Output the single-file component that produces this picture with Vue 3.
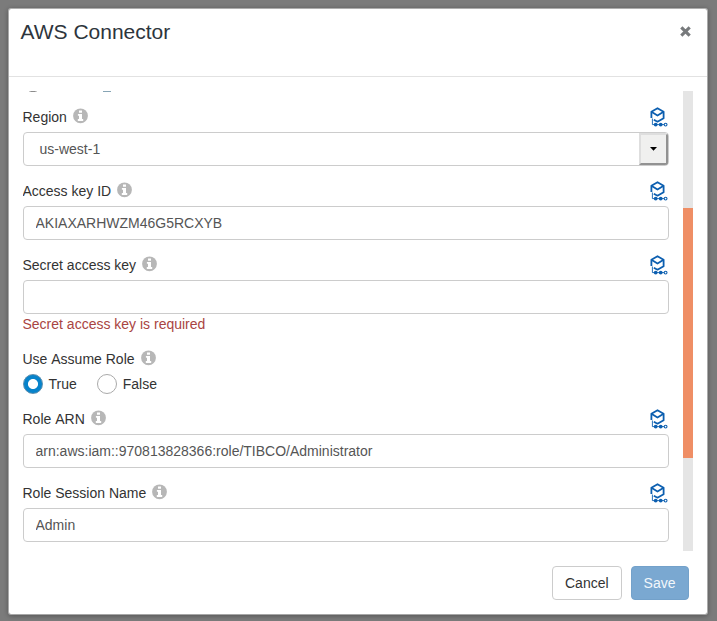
<script setup>
import { ref } from 'vue'

const fields = ref([
  { label: 'Region', type: 'select', value: 'us-west-1' },
  { label: 'Access key ID', type: 'text', value: 'AKIAXARHWZM46G5RCXYB' },
  { label: 'Secret access key', type: 'text', value: '', error: 'Secret access key is required' },
  { label: 'Use Assume Role', type: 'radio', value: 'True', options: ['True', 'False'] },
  { label: 'Role ARN', type: 'text', value: 'arn:aws:iam::970813828366:role/TIBCO/Administrator' },
  { label: 'Role Session Name', type: 'text', value: 'Admin' },
])
</script>

<template>
  <div class="backdrop">
    <section class="modal">
      <header class="head">
        <h1>AWS Connector</h1>
        <svg class="close" width="11" height="11" viewBox="0 0 11 11">
          <path d="M2.4 2.4L8.6 8.6M8.6 2.4L2.4 8.6" stroke="#777a7c" stroke-width="3.1" stroke-linecap="square" />
        </svg>
      </header>

      <div class="body">
        <div class="form">
          <div class="previous"><i class="edge"></i><i class="edge blue"></i></div>
          <div v-for="f in fields" :key="f.label" class="group">
            <div class="label-row">
              <label class="name">{{ f.label }}</label>
              <svg class="info" width="15" height="16" viewBox="0 0 15 16">
                <circle cx="7.5" cy="7.8" r="7.4" fill="#b7b7b7" />
                <path d="M6 2.6h3v2.2H6zM4.9 6h4.1v5h1.2v1.9H4.8V11H6V7.8H4.9z" fill="#fff" />
              </svg>
              <svg v-if="f.type !== 'radio'" class="bind" width="19" height="20" viewBox="0 0 19 20">
                <g fill="none" stroke="#0c5fb0" stroke-linejoin="round">
                  <path d="M2.4 11V4.7L8.5 1.2L14.6 4.7V11.3L8.5 14.7L4.8 12.7" stroke-width="1.8" />
                  <path d="M2.8 5L8.5 8.5L14.2 5" stroke-width="1.8" />
                  <path d="M3.4 11.5V17.6H15" stroke-width=".9" />
                  <circle cx="16.6" cy="17.6" r="1.4" fill="#fff" stroke-width="1.1" />
                </g>
                <circle cx="6.7" cy="17.6" r="1.9" fill="#0c5fb0" />
                <circle cx="11.7" cy="17.6" r="1.9" fill="#0c5fb0" />
              </svg>
            </div>

            <div v-if="f.type === 'radio'" class="radios">
              <label v-for="o in f.options" :key="o" class="radio" @click="f.value = o">
                <span class="dot" :class="{ on: f.value === o }"></span>{{ o }}
              </label>
            </div>
            <div v-else-if="f.type === 'select'" class="select">
              <span>{{ f.value }}</span>
              <div class="arrow">
                <svg width="7" height="4" viewBox="0 0 7 4"><path d="M0 0H7L3.5 3.7Z" fill="#000" /></svg>
              </div>
            </div>
            <input v-else v-model="f.value" type="text" class="control" spellcheck="false" />
            <div v-if="f.error" class="error">{{ f.error }}</div>
          </div>
        </div>
        <div class="track"><div class="thumb"></div></div>
      </div>

      <footer class="foot">
        <button class="btn">Cancel</button>
        <button class="btn primary">Save</button>
      </footer>
    </section>
  </div>
</template>

<style>
body { margin: 0; overflow: hidden; }
</style>

<style scoped>
* { box-sizing: border-box; }
.backdrop {
  width: 717px;
  height: 621px;
  padding: 8px 9px 6px 7.5px;
  background: #7b7b7b;
  font: 14px/20px "Liberation Sans", Arial, sans-serif;
  color: #333;
}
.modal {
  width: 700px;
  height: 607px;
  display: flex;
  flex-direction: column;
  background: #fff;
  background-clip: padding-box;
  border: 1px solid rgba(255, 255, 255, .45);
  border-radius: 3px;
  box-shadow: 0 1px 5px rgba(0, 0, 0, .3);
}
.head {
  height: 68px;
  display: flex;
  justify-content: space-between;
  padding: 11px 16px 0 12px;
  border-bottom: 1px solid #e2e2e2;
}
h1 {
  margin: 0;
  font-size: 21px;
  line-height: 24px;
  font-weight: 400;
  color: #2d353c;
}
.close { margin-top: 6px; }
.body {
  height: 460px;
  margin-top: 14px;
  padding: 0 14px;
  display: flex;
  justify-content: space-between;
}
.form { width: 646px; height: 460px; overflow: hidden; }
.previous { height: 16px; display: flex; gap: 66px; padding-left: 6px; }
.edge { width: 8px; height: 1px; background: linear-gradient(90deg, #ddd, #8c8c8c 30% 70%, #ddd); }
.edge.blue { background: #87a5b5; }
.group { margin-bottom: 15px; }
.label-row { height: 20px; display: flex; align-items: flex-start; margin-bottom: 5px; }
.name { font-kerning: none; }
.info { margin: 1px 0 0 6px; }
.bind { margin-left: auto; margin-right: 1px; }
.control, .select {
  display: flex;
  width: 100%;
  height: 34px;
  border: 1px solid #ccc;
  border-radius: 4px;
  background: #fff;
  font: inherit;
  color: #555;
}
.control { padding: 6px 12px; outline: none; }
.select { padding-left: 16px; line-height: 32px; justify-content: space-between; overflow: hidden; }
.arrow {
  width: 29px;
  height: 32px;
  display: flex;
  align-items: center;
  justify-content: center;
  background: #f0f0ef;
  border: 2px solid;
  border-color: #dedede #929292 #929292 #dedede;
}
.error { color: #a94442; }
.radios { display: flex; gap: 20px; }
.radio { display: flex; gap: 6px; }
.dot { width: 20px; height: 20px; border: 1px solid #aaa; border-radius: 50%; background: #fff; }
.dot.on { background: radial-gradient(circle, #fff 4.6px, #0783cb 5.4px); border-color: #5c8eae; }
.track { width: 10px; height: 460px; background: #e5e5e5; padding-top: 117px; }
.thumb { height: 250px; background: #ef8e65; }
.foot { display: flex; justify-content: flex-end; gap: 9px; padding: 15px 18px 0 0; }
.btn {
  height: 34px;
  padding: 6px 12px;
  border: 1px solid #ccc;
  border-radius: 4px;
  background: #fff;
  font: inherit;
  color: #333;
}
.btn.primary { background: #7aa8d1; border-color: #73a1ca; color: #f2f7fb; }
</style>
